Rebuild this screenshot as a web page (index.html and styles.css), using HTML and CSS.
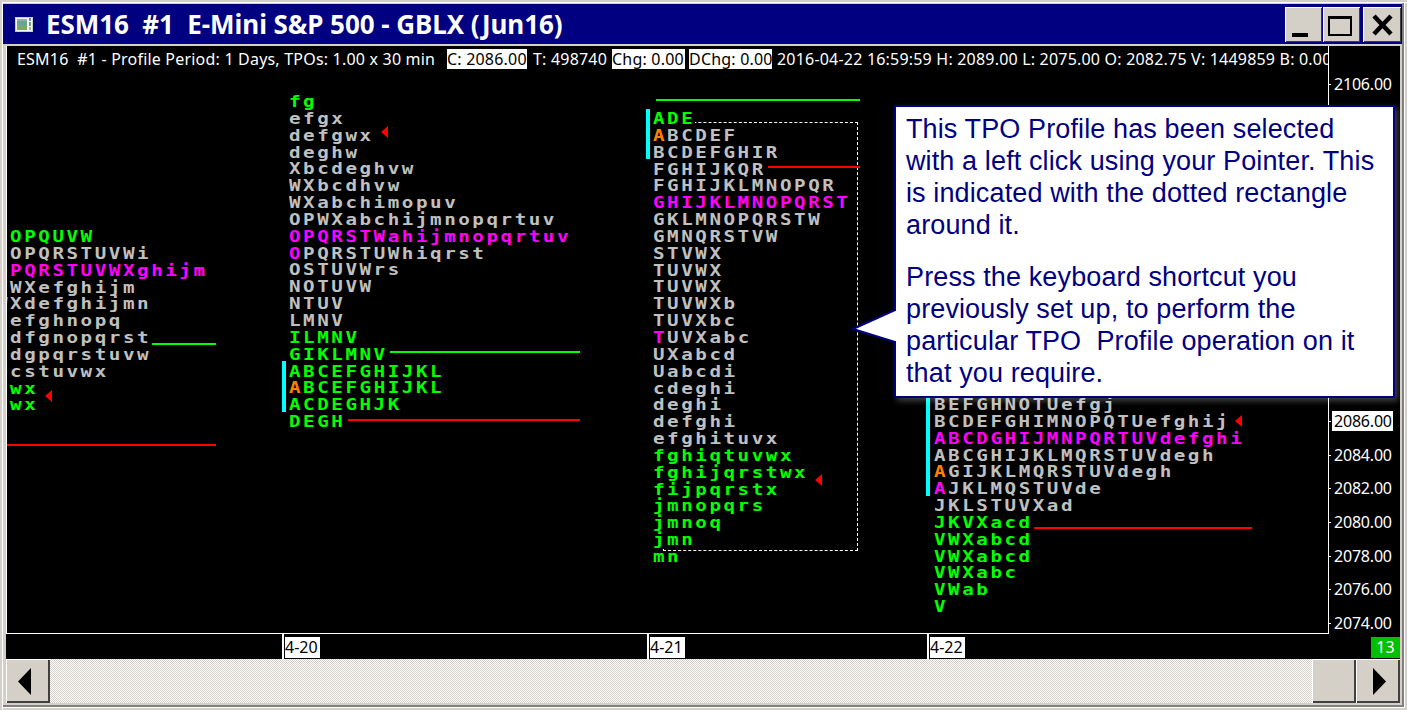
FILE: index.html
```html
<!DOCTYPE html>
<html lang="en">
<head>
  <meta charset="UTF-8" />
  <title>ESM16 #1 E-Mini S&amp;P 500 - GBLX (Jun16)</title>
  <link rel="stylesheet" href="styles.css">
</head>
<body>
  <div class="window">
    <div class="titlebar">
      <svg class="app-icon" width="18" height="15" viewBox="0 0 18 15">
        <rect x="0" y="0" width="18" height="15" fill="#c8d0d0"/>
        <rect x="1" y="1" width="16" height="13" fill="#f4f4f4"/>
        <rect x="2" y="2" width="10" height="2" fill="#a0a8a8"/>
        <rect x="2" y="4" width="10" height="4" fill="#5fa8a0"/>
        <rect x="2" y="8" width="10" height="5" fill="#7fa868"/>
        <rect x="14" y="1" width="2" height="3" fill="#6b86b8"/>
        <rect x="14" y="5" width="2" height="4" fill="#70a070"/>
        <rect x="14" y="10" width="2" height="3" fill="#b0b0b0"/>
      </svg>
      <span class="title-text">ESM16&nbsp; #1&nbsp; E-Mini S&amp;P 500 - GBLX (Jun16)</span>
      <div class="win-buttons">
        <button class="win-btn"><svg width="37" height="35" viewBox="0 0 37 35"><rect x="7" y="26" width="16" height="4" fill="#000"/></svg></button>
        <button class="win-btn"><svg width="37" height="35" viewBox="0 0 37 35"><rect x="6" y="10" width="22" height="18" fill="none" stroke="#000" stroke-width="2"/><rect x="5" y="9" width="24" height="3" fill="#000"/></svg></button>
        <button class="win-btn close"><svg width="38" height="35" viewBox="0 0 38 35"><path d="M11 9 L28 27 M28 9 L11 27" stroke="#000" stroke-width="4.5" fill="none"/></svg></button>
      </div>
    </div>

    <div class="chart">
      <div class="info-bar">
        <span class="info-title">ESM16&nbsp; #1 - Profile Period: 1 Days, TPOs: 1.00 x 30 min</span>
        <span class="info-box box-c">C: 2086.00</span>
        <span class="info-t">T: 498740</span>
        <span class="info-box box-chg">Chg: 0.00</span>
        <span class="info-box box-dchg">DChg: 0.00</span>
        <span class="info-rest">2016-04-22 16:59:59 H: 2089.00 L: 2075.00 O: 2082.75 V: 1449859 B: 0.00</span>
      </div>

      <div class="plot-row">
        <div class="plot">
          <!-- profile 1, cut off by the left edge -->
          <div class="profile p1">
            <div class="green">NOPQUVW</div>
            <div>NOPQRSTUVWi</div>
            <div class="magenta">OPQRSTUVWXghijm</div>
            <div>VWXefghijm</div>
            <div>WXdefghijmn</div>
            <div>defghnopq</div>
            <div>cdfgnopqrst</div>
            <div>cdgpqrstuvw</div>
            <div>bcstuvwx</div>
            <div class="green">vwx</div>
            <div class="green">vwx</div>
          </div>
          <i class="line green-line" style="left:145px;top:272px;width:64px"></i>
          <i class="line red-line" style="left:0;top:373px;width:209px"></i>
          <i class="marker" style="left:38px;top:319px"></i>

          <!-- profile 2 -->
          <div class="profile p2">
            <div class="green">fg</div>
            <div>efgx</div>
            <div>defgwx</div>
            <div>deghw</div>
            <div>Xbcdeghvw</div>
            <div>WXbcdhvw</div>
            <div>WXabchimopuv</div>
            <div>OPWXabchijmnopqrtuv</div>
            <div class="magenta">OPQRSTWahijmnopqrtuv</div>
            <div><span class="magenta">O</span>PQRSTUWhiqrst</div>
            <div>OSTUVWrs</div>
            <div>NOTUVW</div>
            <div>NTUV</div>
            <div>LMNV</div>
            <div class="green">ILMNV</div>
            <div class="green">GIKLMNV</div>
            <div class="green">ABCEFGHIJKL</div>
            <div class="green"><span class="orange">A</span>BCEFGHIJKL</div>
            <div class="green">ACDEGHJK</div>
            <div class="green">DEGH</div>
          </div>
          <i class="va-bar" style="left:275px;top:290px;height:51px"></i>
          <i class="line green-line" style="left:383px;top:280px;width:190px"></i>
          <i class="line red-line" style="left:341px;top:348px;width:232px"></i>
          <i class="marker" style="left:374px;top:55px"></i>

          <!-- profile 3, the selected one -->
          <div class="selection"></div>
          <div class="profile p3">
            <div class="green">ADE</div>
            <div><span class="orange">A</span>BCDEF</div>
            <div>BCDEFGHIR</div>
            <div>FGHIJKQR</div>
            <div>FGHIJKLMNOPQR</div>
            <div class="magenta">GHIJKLMNOPQRST</div>
            <div>GKLMNOPQRSTW</div>
            <div>GMNQRSTVW</div>
            <div>STVWX</div>
            <div>TUVWX</div>
            <div>TUVWX</div>
            <div>TUVWXb</div>
            <div>TUVXbc</div>
            <div><span class="magenta">T</span>UVXabc</div>
            <div>UXabcd</div>
            <div>Uabcdi</div>
            <div>cdeghi</div>
            <div>deghi</div>
            <div>defghi</div>
            <div>efghituvx</div>
            <div class="green">fghiqtuvwx</div>
            <div class="green">fghijqrstwx</div>
            <div class="green">fijpqrstx</div>
            <div class="green">jmnopqrs</div>
            <div class="green">jmnoq</div>
            <div class="green">jmn</div>
            <div class="green">mn</div>
          </div>
          <i class="va-bar" style="left:639px;top:38px;height:50px"></i>
          <i class="line green-line" style="left:649px;top:28px;width:204px"></i>
          <i class="line red-line" style="left:761px;top:95px;width:92px"></i>
          <i class="marker" style="left:808px;top:403px"></i>

          <!-- profile 4, top part sits behind the callout -->
          <div class="profile p4">
            <div>BEFGHNOTUefgj</div>
            <div>BCDEFGHIMNOPQTUefghij</div>
            <div class="magenta">ABCDGHIJMNPQRTUVdefghi</div>
            <div>ABCGHIJKLMQRSTUVdegh</div>
            <div><span class="orange">A</span>GIJKLMQRSTUVdegh</div>
            <div><span class="magenta">A</span>JKLMQSTUVde</div>
            <div>JKLSTUVXad</div>
            <div class="green">JKVXacd</div>
            <div class="green">VWXabcd</div>
            <div class="green">VWXabcd</div>
            <div class="green">VWXabc</div>
            <div class="green">VWab</div>
            <div class="green">V</div>
          </div>
          <i class="va-bar" style="left:919px;top:327px;height:98px"></i>
          <i class="line red-line" style="left:1027px;top:456px;width:218px"></i>
          <i class="marker" style="left:1228px;top:344px"></i>
        </div>

        <!-- price axis -->
        <div class="axis">
          <span class="price" style="top:3px">2106.00</span>
          <span class="price current" style="top:340px">2086.00</span>
          <span class="price" style="top:374px">2084.00</span>
          <span class="price" style="top:407px">2082.00</span>
          <span class="price" style="top:441px">2080.00</span>
          <span class="price" style="top:475px">2078.00</span>
          <span class="price" style="top:508px">2076.00</span>
          <span class="price" style="top:542px">2074.00</span>
        </div>
      </div>

      <div class="time-axis">
        <span class="date" style="left:276px"><b>4-20</b></span>
        <span class="date" style="left:641px"><b>4-21</b></span>
        <span class="date" style="left:921px"><b>4-22</b></span>
        <span class="badge">13</span>
      </div>
    </div>

    <div class="scrollbar">
      <button class="scroll-btn"><svg class="arrow-left" width="13" height="27" viewBox="0 0 13 27"><path d="M13 0 L0 13.5 L13 27 Z" fill="#000"/></svg></button>
      <div class="track"></div>
      <button class="scroll-btn"></button>
      <button class="scroll-btn"><svg class="arrow-right" width="13" height="27" viewBox="0 0 13 27"><path d="M0 0 L13 13.5 L0 27 Z" fill="#000"/></svg></button>
    </div>

    <!-- callout -->
    <div class="callout">
      <svg class="callout-tail" width="47" height="38" viewBox="0 0 47 38">
        <path d="M44 3 L2 22 L44 35" fill="#fff" stroke="#000080" stroke-width="2"/>
        <rect x="44" y="4" width="3" height="30" fill="#fff"/>
      </svg>
      <p>This TPO Profile has been selected with a left click using your Pointer. This is indicated with the dotted rectangle around it.</p>
      <p>Press the keyboard shortcut you previously set up, to perform the particular TPO&nbsp; Profile operation on it that you require.</p>
    </div>
  </div>
</body>
</html>
```

FILE: styles.css
```css
html, body {
  margin: 0;
  padding: 0;
  background: #d4d0c8;
}
.window {
  position: relative;
  width: 1407px;
  height: 710px;
  box-sizing: border-box;
  padding: 4px 7px 7px 6px;
  background: #d4d0c8;
  box-shadow: inset 2px 2px 0 #d4d0c8, inset 3px 3px 0 #fff,
    inset -2px -2px 0 #d4d0c8, inset -3px -3px 0 #fff, inset -5px -5px 0 #808080;
  overflow: hidden;
  display: flex;
  flex-direction: column;
}
.titlebar {
  height: 40px;
  margin: 0 -2px 2px -3px;
  background: #000080;
  color: #fff;
  display: flex;
  align-items: center;
  padding-left: 12px;
  flex-shrink: 0;
}
.app-icon {
  margin-right: 13px;
}
.title-text {
  font-family: "Noto Sans", sans-serif;
  font-weight: 700;
  font-size: 26px;
  letter-spacing: -0.05px;
  white-space: pre;
}
.win-buttons {
  margin-left: auto;
  margin-right: 1px;
  display: flex;
  gap: 1px;
}
.win-btn {
  width: 37px;
  height: 35px;
  padding: 0;
  background: #d4d0c8;
  border: 0;
  box-shadow: inset 1px 1px 0 #fff, inset -1px -1px 0 #404040;
  display: block;
}
.win-btn svg {
  display: block;
}
.win-btn.close {
  width: 38px;
  margin-left: 2px;
}

.chart {
  flex: 1;
  background: #000;
  display: flex;
  flex-direction: column;
}
.info-bar {
  height: 25px;
  width: 1323px;
  flex-shrink: 0;
  display: flex;
  align-items: center;
  overflow: hidden;
  box-sizing: border-box;
  padding-left: 10px;
  border-left: 1px solid #fff;
  border-right: 1px solid #fff;
  color: #fff;
  font-family: "Noto Sans", sans-serif;
  font-size: 16px;
  letter-spacing: 0.2px;
  white-space: pre;
}
.info-title {
  width: 430px;
  flex-shrink: 0;
}
.info-box {
  background: #fff;
  color: #000;
  height: 20px;
  line-height: 20px;
  flex-shrink: 0;
  overflow: hidden;
}
.box-c {
  width: 80px;
}
.info-t {
  width: 85px;
  padding-left: 6px;
  box-sizing: border-box;
  flex-shrink: 0;
}
.box-chg {
  width: 73px;
}
.box-dchg {
  width: 83px;
  margin-left: 4px;
}
.info-rest {
  padding-left: 5px;
  flex-shrink: 0;
}

.plot-row {
  display: flex;
  height: 563px;
  flex-shrink: 0;
}
.plot {
  position: relative;
  width: 1323px;
  flex-shrink: 0;
  box-sizing: border-box;
  overflow: hidden;
  border-left: 1px solid #fff;
  border-right: 1px solid #fff;
  border-bottom: 1px solid #fff;
}
.axis {
  position: relative;
  flex: 1;
}
.profile {
  position: absolute;
  font-family: "DejaVu Sans Mono", monospace;
  font-weight: 700;
  font-size: 16px;
  letter-spacing: 2.12px;
  line-height: 16.85px;
  color: #c0c0c0;
  transform: scaleX(1.2);
  transform-origin: 0 0;
}
.profile div {
  width: fit-content;
  background: #000;
  white-space: pre;
}
.p3 div:last-child {
  background: none;
}
.green {
  color: #00ff00;
}
.magenta {
  color: #ff00ff;
}
.orange {
  color: #ff8000;
}
.p1 {
  left: -11px;
  top: 158px;
}
.p2 {
  left: 282px;
  top: 23px;
}
.p3 {
  left: 646px;
  top: 40px;
}
.p4 {
  left: 927px;
  top: 326px;
}
.line {
  position: absolute;
  height: 2px;
}
.green-line {
  background: #00ff00;
}
.red-line {
  background: #ff0000;
}
.va-bar {
  position: absolute;
  width: 4px;
  background: #00ffff;
}
.marker {
  position: absolute;
  width: 0;
  height: 0;
  border-top: 6px solid transparent;
  border-bottom: 6px solid transparent;
  border-right: 7px solid #ff0000;
}
.selection {
  position: absolute;
  left: 656px;
  top: 51px;
  width: 193px;
  height: 427px;
  border: 1px dashed #fff;
}
.price {
  position: absolute;
  left: 3px;
  height: 20px;
  padding: 0 1px 0 2px;
  line-height: 20px;
  color: #fff;
  font-family: "Noto Sans", sans-serif;
  font-size: 16px;
  letter-spacing: -0.2px;
}
.price::before {
  content: "";
  position: absolute;
  left: -3px;
  top: 10px;
  width: 2px;
  height: 1px;
  background: #fff;
}
.price.current {
  background: #fff;
  color: #000;
}

.time-axis {
  position: relative;
  flex: 1;
}
.date {
  position: absolute;
  top: 0;
  bottom: 0;
  border-left: 2px solid #fff;
  padding: 3px 0 0 1px;
  font-family: "Noto Sans", sans-serif;
  font-size: 16px;
}
.date b {
  display: block;
  width: 35px;
  height: 21px;
  line-height: 21px;
  background: #fff;
  color: #000;
  font-weight: 400;
}
.badge {
  position: absolute;
  right: 0;
  top: 3px;
  width: 29px;
  height: 21px;
  background: #00c000;
  color: #fff;
  text-align: center;
  font-family: "Noto Sans", sans-serif;
  font-size: 16px;
  line-height: 21px;
}

.scrollbar {
  height: 44px;
  display: flex;
  flex-shrink: 0;
}
.scroll-btn {
  width: 44px;
  height: 44px;
  padding: 0;
  background: #d4d0c8;
  border: 0;
  box-shadow: inset 1px 1px 0 #fff, inset -2px -2px 0 #404040;
  display: flex;
  align-items: center;
  justify-content: center;
  flex-shrink: 0;
}
.arrow-left {
  margin-right: 7px;
}
.arrow-right {
  margin-left: 3px;
}
.track {
  flex: 1;
  background: repeating-conic-gradient(#d4d0c8 0 25%, #fff 0 50%) 0 0 / 2px 2px;
}

.callout {
  position: absolute;
  left: 894px;
  top: 105px;
  width: 501px;
  height: 293px;
  box-sizing: border-box;
  padding: 6px 10px;
  background: #fff;
  border: 2px solid #000080;
  box-shadow: 3px 3px 6px rgba(255, 255, 255, 0.25);
  color: #000080;
  font-family: "Liberation Sans", sans-serif;
  font-size: 27px;
  letter-spacing: 0.12px;
  line-height: 32px;
}
.callout p {
  margin: 0 0 20px 0;
}
.callout-tail {
  position: absolute;
  left: -45px;
  top: 200px;
}
```
